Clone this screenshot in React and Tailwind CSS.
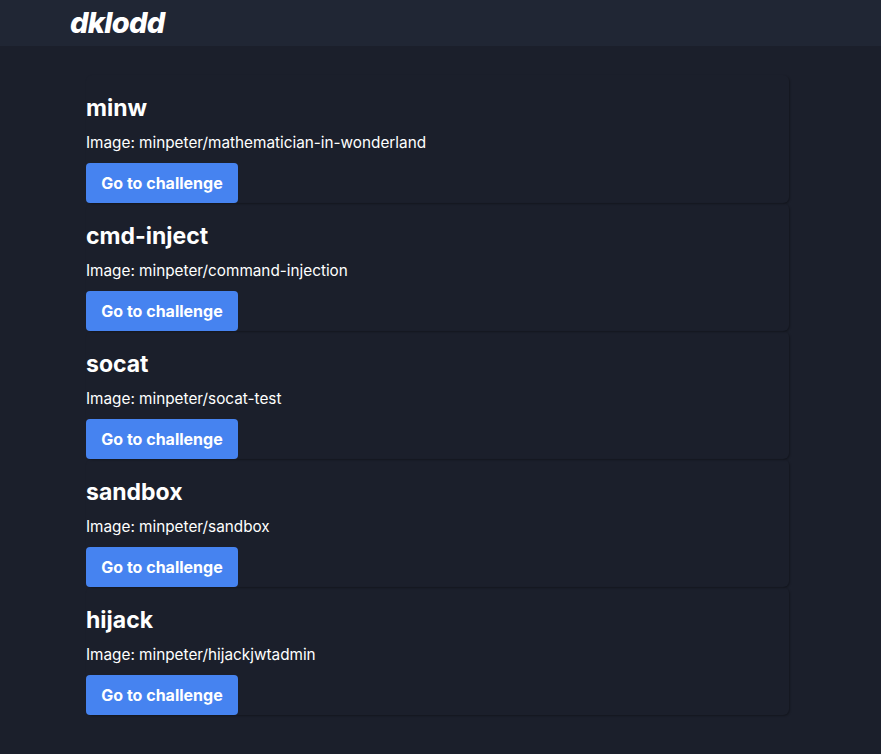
const challenges = [
  { name: 'minw', image: 'minpeter/mathematician-in-wonderland' },
  { name: 'cmd-inject', image: 'minpeter/command-injection' },
  { name: 'socat', image: 'minpeter/socat-test' },
  { name: 'sandbox', image: 'minpeter/sandbox' },
  { name: 'hijack', image: 'minpeter/hijackjwtadmin' }
];

const App = () => {
  return (
    <div
      className="min-h-screen bg-[#1b1f2b] text-white"
      style={{ fontFamily: 'Inter, "Noto Sans", sans-serif' }}
    >
      <header className="h-[46px] bg-[#202634] flex items-center">
        <h1 className="ml-[70px] text-[29px] font-extrabold italic tracking-tight leading-none -mt-[2px]">dklodd</h1>
      </header>
      <main className="ml-[86px] w-[703px] pt-[29px] pb-10">
        {challenges.map((c) => (
          <div key={c.name} className="rounded-md shadow-[1px_1px_2px_rgba(0,0,0,0.3)]">
            <h2 className="pt-[18px] text-[23px] font-bold leading-[30px]">{c.name}</h2>
            <p className="mt-2 text-[15.3px] leading-6">Image: {c.image}</p>
            <button className="mt-2 h-10 w-[152px] rounded bg-[#4683f0] text-[16px] font-bold text-white">
              Go to challenge
            </button>
          </div>
        ))}
      </main>
    </div>
  );
};

export default App;
